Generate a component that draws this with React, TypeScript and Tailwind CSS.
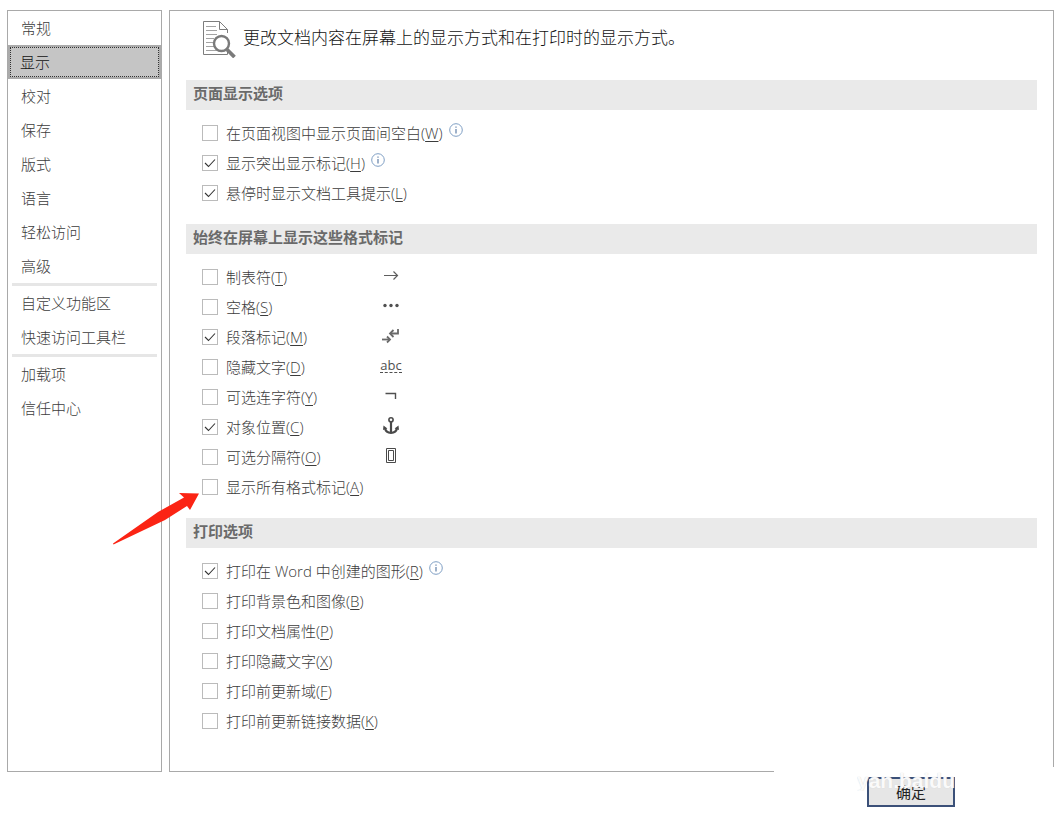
import React from 'react';

interface Option {
  text: string;
  accessKey: string;
  checked?: boolean;
  info?: boolean;
  mark?: React.ReactNode;
  pointed?: boolean;
}

interface Section {
  title: string;
  options: Option[];
}

const NAV_GROUPS = [
  ['常规', '显示', '校对', '保存', '版式', '语言', '轻松访问', '高级'],
  ['自定义功能区', '快速访问工具栏'],
  ['加载项', '信任中心'],
];

const ACTIVE_NAV = '显示';

const TabMark = () => (
  <svg width="24" height="20" viewBox="0 0 24 20" fill="none" stroke="#5f5f5f" strokeWidth="1.2">
    <path d="M5 9.5H18.5M14.5 5.5L18.5 9.5L14.5 13.5" />
  </svg>
);

const SpaceMark = () => (
  <svg width="24" height="20" viewBox="0 0 24 20" fill="#505050">
    <circle cx="6" cy="9.5" r="1.7" />
    <circle cx="12" cy="9.5" r="1.7" />
    <circle cx="18" cy="9.5" r="1.7" />
  </svg>
);

const ParagraphMark = () => (
  <svg width="24" height="20" viewBox="0 0 24 20" fill="none" stroke="#6a6a6a" strokeWidth="1.8">
    <path d="M19 3V7.5H12" />
    <path d="M14.5 4L11 7.5L14.5 11" />
    <path d="M3 13.5H11" />
    <path d="M8 10.5L11 13.5L8 16.5" />
  </svg>
);

const HiddenTextMark = () => (
  <span className="w-[22px] border-b border-dashed border-[#505050] text-center text-[13px] leading-[13px] font-normal text-[#505050]">
    abc
  </span>
);

const HyphenMark = () => (
  <svg width="24" height="20" viewBox="0 0 24 20" fill="none" stroke="#505050" strokeWidth="1.4">
    <path d="M6.5 7.5H16.5V13" />
  </svg>
);

const AnchorMark = () => (
  <svg width="24" height="20" viewBox="0 0 24 20" fill="none" stroke="#4a4a4a">
    <circle cx="12" cy="3.8" r="2.1" strokeWidth="1.6" />
    <path d="M12 6V17" strokeWidth="2.2" />
    <path d="M6 12C6.5 15 9 16.8 12 16.8C15 16.8 17.5 15 18 12" strokeWidth="2.2" />
    <path d="M4 14L4.500 9.500L8.4 12.6ZM20 14L19.500 9.500L15.6 12.6Z" fill="#4a4a4a" stroke="none" />
  </svg>
);

const BreakMark = () => (
  <svg width="24" height="20" viewBox="0 0 24 20" fill="none" stroke="#4a4a4a">
    <path d="M7.5 2.5H16.5V16.5H7.5Z" />
    <path d="M9.5 4.500H14.5V14.500H9.5Z" />
  </svg>
);

const SECTIONS: Section[] = [
  {
    title: '页面显示选项',
    options: [
      { text: '在页面视图中显示页面间空白', accessKey: 'W', info: true },
      { text: '显示突出显示标记', accessKey: 'H', checked: true, info: true },
      { text: '悬停时显示文档工具提示', accessKey: 'L', checked: true },
    ],
  },
  {
    title: '始终在屏幕上显示这些格式标记',
    options: [
      { text: '制表符', accessKey: 'T', mark: <TabMark /> },
      { text: '空格', accessKey: 'S', mark: <SpaceMark /> },
      { text: '段落标记', accessKey: 'M', checked: true, mark: <ParagraphMark /> },
      { text: '隐藏文字', accessKey: 'D', mark: <HiddenTextMark /> },
      { text: '可选连字符', accessKey: 'Y', mark: <HyphenMark /> },
      { text: '对象位置', accessKey: 'C', checked: true, mark: <AnchorMark /> },
      { text: '可选分隔符', accessKey: 'O', mark: <BreakMark /> },
      { text: '显示所有格式标记', accessKey: 'A', pointed: true },
    ],
  },
  {
    title: '打印选项',
    options: [
      { text: '打印在 Word 中创建的图形', accessKey: 'R', checked: true, info: true },
      { text: '打印背景色和图像', accessKey: 'B' },
      { text: '打印文档属性', accessKey: 'P' },
      { text: '打印隐藏文字', accessKey: 'X' },
      { text: '打印前更新域', accessKey: 'F' },
      { text: '打印前更新链接数据', accessKey: 'K' },
    ],
  },
];

const InfoIcon = () => (
  <svg className="mb-1.5 ml-1.5" width="14" height="14" viewBox="0 0 14 14" fill="none" stroke="#7f9fc4">
    <circle cx="7" cy="7" r="6.3" />
    <path d="M7 6V10.5M7 3.4V4.8" stroke="#5f7fa8" strokeWidth="1.2" />
  </svg>
);

const PageSearchIcon = () => (
  <svg width="34" height="38" viewBox="0 0 34 38" fill="none">
    <path d="M25.5 13V9.5L17.5 1.5H1.5V34.5H25.5V32" stroke="#7d7d7d" />
    <path d="M17.5 1.5V9.5H25.5" stroke="#7d7d7d" />
    <path d="M4 6.5H14M4 10.5H15M4 14.5H15M4 18.5H12M4 22.5H11M4 26.5H12M4 30.5H16" stroke="#a3a3a3" />
    <circle cx="19.5" cy="23.5" r="7.5" fill="#fff" stroke="#7a7a7a" strokeWidth="2.4" />
    <path d="M25 29.5L32.5 37" stroke="#7a7a7a" strokeWidth="3.8" />
  </svg>
);

const PointerArrow = () => (
  <svg
    className="pointer-events-none absolute top-5 -left-[90px]"
    width="88"
    height="54"
    viewBox="0 0 88 54"
    fill="#fb2414"
  >
    <path d="M87 1.5L67 1L72 5.5L46 20L1 51.5L1.5 52.5L53 28L75 14L78 18Z" />
  </svg>
);

const OptionRow: React.FC<{ option: Option }> = ({ option }) => (
  <li className="relative flex h-[30px] items-center">
    <label className="flex min-w-[177px] items-center whitespace-nowrap">
      <span className="mr-2 grid size-4 place-items-center">
        <input
          type="checkbox"
          defaultChecked={option.checked}
          className="peer col-start-1 row-start-1 size-4 appearance-none border border-[#bbb] bg-white"
        />
        <svg
          className="pointer-events-none invisible col-start-1 row-start-1 peer-checked:visible"
          width="16"
          height="16"
          viewBox="0 0 16 16"
          fill="none"
          stroke="#333"
          strokeWidth="1.1"
        >
          <path d="M3 8L6.5 11.5L13 4.5" />
        </svg>
      </span>
      <span>
        {option.text}(<span className="underline underline-offset-2">{option.accessKey}</span>)
      </span>
      {option.info && <InfoIcon />}
    </label>
    {option.mark && <span className="mb-0.5 flex w-6 justify-center">{option.mark}</span>}
    {option.pointed && <PointerArrow />}
  </li>
);

const Sidebar = () => (
  <nav className="w-[155px] shrink-0 border border-[#a9a9a9]">
    {NAV_GROUPS.map((group, i) => (
      <ul key={i}>
        {i > 0 && <li className="mx-1 h-[3px] bg-[#e6e6e6]" />}
        {group.map((name) => (
          <li key={name}>
            <button
              className={`block h-[34px] w-full text-left ${
                name === ACTIVE_NAV ? 'border-2 border-[#ababab] bg-[#c5c5c5] text-[#111]' : 'px-[13px]'
              }`}
            >
              {name === ACTIVE_NAV ? (
                <span className="flex h-full items-center border border-dotted border-[#333] px-[9px]">{name}</span>
              ) : (
                name
              )}
            </button>
          </li>
        ))}
      </ul>
    ))}
  </nav>
);

export default function App() {
  return (
    <div className="min-h-screen bg-white px-[7px] pt-2.5 font-['Open_Sans','Noto_Sans_CJK_SC',sans-serif] text-[15px] leading-5 font-light text-[#3c3c3c]">
      <div className="flex gap-[7px]">
        <Sidebar />
        <main className="relative flex-1 border border-[#a9a9a9] px-4 pb-[35px]">
          <header className="flex h-[69px] items-start gap-[7px] pt-[9px] pl-4">
            <PageSearchIcon />
            <h1 className="pt-1.5 text-[17px] leading-6 text-[#111]">
              更改文档内容在屏幕上的显示方式和在打印时的显示方式。
            </h1>
          </header>
          <div className="flex flex-col gap-4">
            {SECTIONS.map((section) => (
              <section key={section.title}>
                <h2 className="h-[30px] bg-[#eaeaea] px-[7px] leading-[26px] font-bold text-[#6a6a6a]">
                  {section.title}
                </h2>
                <ul className="pt-2 pl-4">
                  {section.options.map((option) => (
                    <OptionRow key={option.accessKey} option={option} />
                  ))}
                </ul>
              </section>
            ))}
          </div>
          {/* frame stays open at the corner above the button */}
          <div className="absolute -right-px -bottom-px h-[5px] w-[280px] bg-white" />
        </main>
      </div>
      <footer className="flex justify-end pt-[5px] pr-[99px]">
        <div className="relative">
          <button className="h-[30px] w-[88px] border-2 border-[#3b5078] bg-[#e6e6e6] font-normal text-[#222]">
            确定
          </button>
          <span className="pointer-events-none absolute -top-1.5 right-0 w-[98px] overflow-hidden font-['Liberation_Sans',sans-serif] text-[21px] leading-5 font-bold whitespace-nowrap text-white/90 [text-shadow:0_0_1px_#ccc]">
            yan.baidu
          </span>
        </div>
      </footer>
    </div>
  );
}
